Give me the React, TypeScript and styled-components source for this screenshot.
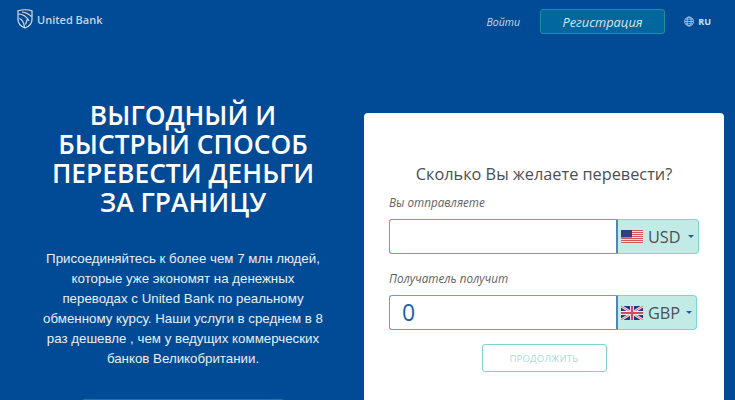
import styled, { createGlobalStyle } from "styled-components";

const GlobalStyle = createGlobalStyle`
  html, body {
    margin: 0;
    padding: 0;
    background: #004a96;
    overflow: hidden;
  }
  * { box-sizing: border-box; }
`;

const Page = styled.div`
  width: 735px;
  height: 400px;
  overflow: hidden;
  background: #004a96;
  font-family: "Open Sans", "Noto Sans", sans-serif;
`;

const Header = styled.header`
  display: flex;
  align-items: center;
  height: 43px;
  padding: 0 24px 0 17px;
`;

const Logo = styled.div`
  display: flex;
  align-items: center;
  gap: 4px;
  color: #c6d5e6;
  font-size: 11px;
  font-weight: 600;
  padding-bottom: 5px;
`;

const Nav = styled.nav`
  margin-left: auto;
  display: flex;
  align-items: center;
`;

const LoginLink = styled.a`
  color: #c9dcf0;
  font-size: 10.5px;
  font-style: italic;
  margin-right: 20px;
`;

const RegisterButton = styled.button`
  width: 125px;
  height: 25px;
  padding: 0;
  background: #02679e;
  border: 1px solid #1a8f9f;
  border-radius: 3px;
  color: #d5e6f2;
  font-family: inherit;
  font-size: 12.8px;
  font-style: italic;
  margin-right: 19px;
`;

const Lang = styled.div`
  display: flex;
  align-items: center;
  gap: 4px;
  width: 27px;
  color: #d7e3f0;
  font-size: 9px;
  font-weight: 700;
`;

const Main = styled.main`
  display: flex;
  align-items: flex-start;
`;

const Promo = styled.section`
  width: 364px;
  display: flex;
  flex-direction: column;
  align-items: center;
  padding: 58px 0 0 2px;
`;

const Title = styled.h1`
  margin: 0;
  width: 275px;
  color: #fff;
  font-family: "Open Sans", "Noto Sans", sans-serif;
  font-size: 26.4px;
  line-height: 29px;
  font-weight: 600;
  text-align: center;
`;

const Lead = styled.p`
  margin: 32px 0 0;
  width: 285px;
  color: #e9f0f7;
  font-family: "Liberation Sans", Arial, sans-serif;
  font-size: 13.3px;
  line-height: 20px;
  text-align: center;
`;

const PromoButton = styled.div`
  flex: none;
  width: 202px;
  height: 30px;
  margin-top: 30px;
  background: #0a7fa8;
  border-radius: 3px;
`;

const Card = styled.section`
  width: 360px;
  height: 300px;
  margin-top: 70px;
  padding: 50px 25px 0;
  background: #fff;
  border-radius: 4px;
`;

const CardTitle = styled.h2`
  margin: 0 0 10px;
  color: #4a4f55;
  font-size: 16.3px;
  line-height: 22px;
  font-weight: 400;
  text-align: center;
`;

const FieldLabel = styled.label`
  display: block;
  margin-bottom: 9px;
  color: #5f6368;
  font-size: 11.7px;
  line-height: 15px;
  font-style: italic;
`;

const Field = styled.div<{ $last?: boolean }>`
  display: flex;
  width: ${({ $last }) => ($last ? "308px" : "310px")};
  height: 35px;
  margin-bottom: ${({ $last }) => ($last ? "14px" : "17px")};
`;

const AmountInput = styled.div`
  width: 229px;
  height: 100%;
  padding-left: 12px;
  border: 1px solid #6f9bd0;
  border-right: 2px solid #4f86b5;
  border-radius: 3px 0 0 3px;
  color: #1c5fac;
  font-size: 23px;
  line-height: 32px;
`;

const CurrencySelect = styled.div`
  flex: 1;
  display: flex;
  align-items: center;
  padding: 0 4px 0 3px;
  background: #c2ebe6;
  border: 1px solid #7bd6cf;
  border-left: 0;
  border-radius: 0 4px 4px 0;
  color: #4a5058;
  font-size: 16.3px;
`;

const CurrencyCode = styled.span`
  margin-left: 5px;
`;

const Caret = styled.span`
  margin-left: auto;
  width: 0;
  height: 0;
  border-left: 3px solid transparent;
  border-right: 3px solid transparent;
  border-top: 3px solid #1c5fac;
`;

const SubmitRow = styled.div`
  display: flex;
  justify-content: center;
`;

const SubmitButton = styled.button`
  width: 125px;
  height: 28px;
  padding: 0;
  background: #fff;
  border: 1px solid #7dd5cf;
  border-radius: 3px;
  color: #a9dcd8;
  font-family: inherit;
  font-size: 9.5px;
  letter-spacing: 0.2px;
`;

const BankMark = () => (
  <svg width="16" height="20" viewBox="0 0 16 20" fill="none" stroke="#d5e0ec" strokeWidth="1.2">
    <path d="M1 1.800C5 .6 11 .6 15 1.800V10.500c0 4-3 7-7 8.500-4-1.500-7-4.500-7-8.500Z" />
    <path d="M1.500 5c4 0 7.500 1.500 10.500 7M5 3c4 .5 7 2 9.500 4.500M2.500 9.500c2.500 1 4.500 3.500 5 9M8.500 15.500c1-2.500 1.500-3.500 1.500-5" />
  </svg>
);

const GlobeIcon = () => (
  <svg width="11" height="11" viewBox="0 0 11 11" fill="none" stroke="#b9cfe6" strokeWidth="0.9">
    <circle cx="5.500" cy="5.500" r="4.800" />
    <ellipse cx="5.500" cy="5.500" rx="2.200" ry="4.800" />
    <path d="M.7 5.500h9.600M1.400 3h8.200M1.400 8h8.200" />
  </svg>
);

const UsFlag = () => (
  <svg width="22" height="14" viewBox="0 0 22 14">
    <rect width="22" height="14" fill="#f4f0f0" />
    {[0, 2, 4, 6, 8, 10, 12].map((y) => (
      <rect key={y} y={y} width="22" height="1.100" fill="#d9535f" />
    ))}
    <rect width="11" height="7.500" fill="#2f3f7f" />
  </svg>
);

const GbFlag = () => (
  <svg width="22" height="14" viewBox="0 0 22 14">
    <rect width="22" height="14" fill="#27377f" />
    <path d="M0 0l22 14M22 0L0 14" stroke="#f2eef0" strokeWidth="2.600" />
    <path d="M0 0l22 14M22 0L0 14" stroke="#d9455a" strokeWidth="0.800" />
    <path d="M11 0v14M0 7h22" stroke="#f2eef0" strokeWidth="4" />
    <path d="M11 0v14M0 7h22" stroke="#d9455a" strokeWidth="2.200" />
  </svg>
);

export default function App() {
  return (
    <Page>
      <GlobalStyle />
      <Header>
        <Logo>
          <BankMark />
          United Bank
        </Logo>
        <Nav>
          <LoginLink>Войти</LoginLink>
          <RegisterButton>Регистрация</RegisterButton>
          <Lang>
            <GlobeIcon />
            RU
          </Lang>
        </Nav>
      </Header>
      <Main>
        <Promo>
          <Title>ВЫГОДНЫЙ И БЫСТРЫЙ СПОСОБ ПЕРЕВЕСТИ ДЕНЬГИ ЗА ГРАНИЦУ</Title>
          <Lead>
            Присоединяйтесь к более чем 7 млн людей, которые уже экономят на
            денежных переводах с United Bank по реальному обменному курсу. Наши
            услуги в среднем в 8 раз дешевле , чем у ведущих коммерческих банков
            Великобритании.
          </Lead>
          <PromoButton />
        </Promo>
        <Card>
          <CardTitle>Сколько Вы желаете перевести?</CardTitle>
          <FieldLabel>Вы отправляете</FieldLabel>
          <Field>
            <AmountInput />
            <CurrencySelect>
              <UsFlag />
              <CurrencyCode>USD</CurrencyCode>
              <Caret />
            </CurrencySelect>
          </Field>
          <FieldLabel>Получатель получит</FieldLabel>
          <Field $last>
            <AmountInput>0</AmountInput>
            <CurrencySelect>
              <GbFlag />
              <CurrencyCode>GBP</CurrencyCode>
              <Caret />
            </CurrencySelect>
          </Field>
          <SubmitRow>
            <SubmitButton>ПРОДОЛЖИТЬ</SubmitButton>
          </SubmitRow>
        </Card>
      </Main>
    </Page>
  );
}
